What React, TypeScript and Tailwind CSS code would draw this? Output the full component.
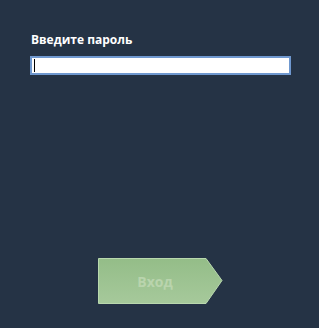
import React from "react";

export default function App() {
  return (
    <div className="w-[319px] h-[328px] bg-[#253345] flex flex-col" style={{ fontFamily: '"Open Sans", "Noto Sans", sans-serif' }}>
      <div className="pt-[32px] pl-[31px] text-[12px] font-bold text-white leading-[16px]">Введите пароль</div>
      <div className="mt-[8px] ml-[30px] w-[261px] h-[19px] border-2 border-[#6f98cf] bg-white flex items-center pl-[2px]">
        <div className="w-[1px] h-[13px] bg-black" />
      </div>
      <div className="mt-[183px] ml-[98px] relative w-[125px] h-[46px] flex items-center">
        <svg className="absolute inset-0" width="125" height="46" viewBox="0 0 125 46">
          <defs>
            <linearGradient id="g" x1="0" y1="0" x2="0" y2="1">
              <stop offset="0" stopColor="#94bd88" />
              <stop offset="1" stopColor="#a6c99b" />
            </linearGradient>
          </defs>
          <polygon points="0.5,0.5 108,0.5 124,22.5 108,45.5 0.5,45.5" fill="url(#g)" stroke="#b9d8ae" strokeWidth="1" />
        </svg>
        <span className="relative w-[114px] text-center text-[14px] font-bold text-[#b9d4ad]">Вход</span>
      </div>
    </div>
  );
}
